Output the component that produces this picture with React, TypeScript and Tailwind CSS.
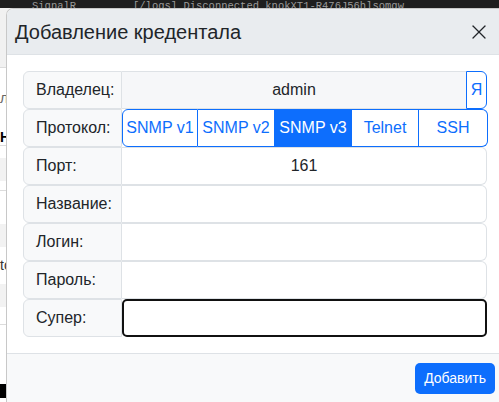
import { X } from 'lucide-react'

const protocols = [
  { name: 'SNMP v1', w: 'w-[76px]', active: false },
  { name: 'SNMP v2', w: 'w-[77px]', active: false },
  { name: 'SNMP v3', w: 'w-[77px]', active: true },
  { name: 'Telnet', w: 'w-[67px]', active: false },
  { name: 'SSH', w: 'w-[69px]', active: false },
]

function Label({ children }: { children: React.ReactNode }) {
  return (
    <div className="w-[99px] shrink-0 flex items-center px-3 border border-[#dee2e6] bg-[#f8f9fa] rounded-l-[6px] text-[16px] text-[#212529]">
      {children}
    </div>
  )
}

function TextRow({ label, value }: { label: string; value?: string }) {
  return (
    <div className="flex h-[38px]">
      <Label>{label}</Label>
      <div className="flex-1 flex items-center justify-center border-y border-r border-[#dee2e6] rounded-r-[6px] bg-white text-[16px] text-[#212529]">
        {value}
      </div>
    </div>
  )
}

export default function App() {
  return (
    <div className="relative w-[499px] h-[402px] overflow-hidden bg-white font-['Liberation_Sans',Arial,sans-serif]">
      {/* Page behind the modal */}
      <div className="h-[8px] bg-[#1e1e1e] overflow-hidden">
        <div className="flex font-['Liberation_Mono','DejaVu_Sans_Mono',monospace] text-[10.5px] leading-[12px] text-[#9a9a9a] whitespace-nowrap">
          <span className="ml-[32px] w-[101px]">SignalR</span>
          <span>[/logs] Disconnected knokXT1-R476J56hlsomgw</span>
        </div>
      </div>
      <div className="flex flex-col w-[40px] text-[14px] leading-[16px]">
        <div className="h-[60px] bg-[#f1f1f1] border-b border-[#dcdcdc]" />
        <div className="h-[38px] flex items-end pl-0 text-[#666]">ли</div>
        <div className="h-[40px] flex items-end font-bold text-black border-b border-[#dcdcdc]">Н</div>
        <div className="h-[12px]" />
        <div className="h-[23px] bg-[#f2f2f2]" />
        <div className="h-[10px] border-b border-[#dcdcdc]" />
        <div className="h-[33px]" />
        <div className="h-[23px] bg-[#f2f2f2]" />
        <div className="h-[26px] flex items-end text-[#333]">tc</div>
        <div className="h-[11px]" />
        <div className="h-[23px] bg-[#f2f2f2]" />
        <div className="h-[18px] border-b border-[#dcdcdc]" />
        <div className="h-[59px]" />
        <div className="h-[14px] bg-black" />
      </div>

      {/* Modal */}
      <div className="absolute left-[6px] top-[8px] w-[497px] h-[400px] flex flex-col bg-white border-l border-t border-[#c8c8c8] rounded-tl-[7px] overflow-hidden">
        <div className="h-[46px] shrink-0 flex items-center justify-between pl-2 pr-[12px] bg-[#e9ecef] border-b border-[#dee2e6]">
          <h5 className="text-[20px] leading-[30px] text-[#212529]">Добавление кредентала</h5>
          <X className="w-6 h-6 text-[#212529]" strokeWidth={1.25} />
        </div>

        <div className="px-4 py-4 flex flex-col">
          <div className="flex h-[38px]">
            <Label>Владелец:</Label>
            <div className="flex-1 flex items-center justify-center border-y border-[#dee2e6] bg-[#f6f7f9] text-[16px] text-[#212529]">
              admin
            </div>
            <button className="w-[21px] shrink-0 flex items-center justify-center border border-[#0d6efd] rounded-r-[6px] text-[16px] text-[#0d6efd] bg-white">
              Я
            </button>
          </div>

          <div className="flex h-[38px]">
            <Label>Протокол:</Label>
            <div className="flex-1 flex">
              {protocols.map((p, i) => (
                <button
                  key={p.name}
                  className={
                    p.w +
                    ' flex items-center justify-center border-y border-r border-[#0d6efd] text-[16px] ' +
                    (i === 0 ? 'border-l rounded-l-[6px] ' : '') +
                    (i === protocols.length - 1 ? 'rounded-r-[6px] ' : '') +
                    (p.active ? 'bg-[#0d6efd] text-white' : 'bg-white text-[#0d6efd]')
                  }
                >
                  {p.name}
                </button>
              ))}
            </div>
          </div>

          <TextRow label="Порт:" value="161" />
          <TextRow label="Название:" />
          <TextRow label="Логин:" />
          <TextRow label="Пароль:" />

          <div className="flex h-[38px]">
            <Label>Супер:</Label>
            <div className="flex-1 border-2 border-[#111] rounded-[5px] bg-white" />
          </div>
        </div>

        <div className="flex-1 flex justify-end items-start pt-[9px] pr-2 bg-[#f8f9fa] border-t border-[#dee2e6]">
          <button className="h-[31px] px-[9px] rounded-[5px] bg-[#0d6efd] text-white text-[14px]">
            Добавить
          </button>
        </div>
      </div>
    </div>
  )
}
